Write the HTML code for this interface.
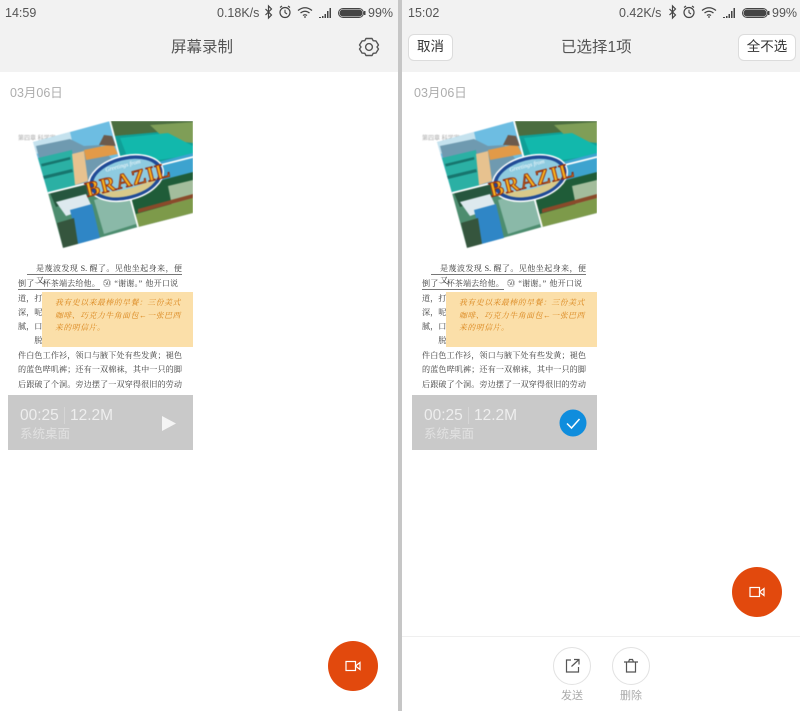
<!DOCTYPE html>
<html lang="zh"><head><meta charset="utf-8"><title>屏幕录制</title>
<style>
*{box-sizing:border-box;margin:0;padding:0}
html,body{width:800px;height:711px;overflow:hidden;background:#fff}
body{position:relative;font-family:"Liberation Sans","Noto Sans CJK SC",sans-serif;color:#555;filter:blur(.3px)}
.a{position:absolute;white-space:nowrap}
.hd{position:absolute;top:0;height:72px;background:#f2f2f2}
.st{font-size:12.5px;color:#555;top:5px;line-height:16px}
.ti{font-size:15.5px;color:#555;top:38px;line-height:20px}
.dt{font-size:12.5px;color:#adadad;top:85px;line-height:16px}
.btn{position:absolute;top:34px;height:27px;background:#fff;border:1.5px solid #dcdcdc;border-radius:6px;font-size:13.5px;color:#333;text-align:center;line-height:24px}
.th{position:absolute;top:121px;width:185px;height:329px;overflow:hidden;background:#fff}
.th svg{position:absolute;left:0;top:0}
.pc{filter:blur(.5px)}
.ln{position:absolute;left:10px;width:164px;font:8.1px/12px "Liberation Serif","Noto Serif CJK SC",serif;color:#3a3a3a;white-space:nowrap}
.j{white-space:normal;text-align:justify;text-align-last:justify;text-justify:inter-character}
.nt{position:absolute;left:34px;top:171px;width:151px;height:55px;background:#fbdfa9;font:italic 7.8px/12.500px "Liberation Serif","Noto Serif CJK SC",serif;color:#d98318;padding:5px 0 0 13px;letter-spacing:.6px;white-space:nowrap}
.ul{position:absolute;height:1px;background:#777}
.bar{position:absolute;left:0;top:274px;width:185px;height:55px;background:#c9c9c9}
.bar div{position:absolute;white-space:nowrap;color:rgba(255,255,255,.68)}
.tm{left:12px;top:11px;font-size:15.5px;line-height:20px}
.sz{left:62px;top:11px;font-size:15.5px;line-height:20px}
.dv{left:56px;top:12px;width:1px;height:17px;background:rgba(255,255,255,.25)}
.nm{left:12px;top:31px;font-size:12.5px;line-height:16px;color:rgba(255,255,255,.45)!important}
.fab{position:absolute;width:50px;height:50px;border-radius:50%;background:#e2490d}
.fab svg{position:absolute;left:15px;top:15px}
.cc{position:absolute;top:647px;width:38px;height:38px;border-radius:50%;border:1px solid #e2e2e2;background:#fff}
.cl{position:absolute;top:689px;font-size:11px;line-height:14px;color:#aaa;text-align:center;width:38px}
</style></head><body>

<div class="hd" style="left:0;width:398px"></div>
<div class="hd" style="left:402px;width:398px"></div>
<div class="a" style="left:398px;top:0;width:4px;height:711px;background:#c6c6c6"></div>

<!-- LEFT status -->
<div class="a st" style="left:5px">14:59</div>
<div class="a st" style="left:217px">0.18K/s</div>
<svg class="a" style="left:264px;top:4px" width="128" height="16" viewBox="0 0 128 16" fill="none" stroke="#444">
<path d="M1.500 5l6 6-3 3V2l3 3-6 6" stroke-width="1.200"/>
<circle cx="21" cy="8.500" r="5" stroke-width="1.200"/><path d="M21 5.800V8.600l2 1.400M16 3.500l2-1.500M26 3.500l-2-1.500" stroke-width="1.100"/>
<path d="M34 6.500q7-5.500 14 0M36.500 9q4.500-3.500 9 0M39 11.500q2-1.500 4 0" stroke-width="1.300"/><circle cx="41" cy="13" r=".9" fill="#444" stroke="none"/>
<path d="M55 13h2v1h-2zM58 12h1.500v2H58zM60.500 10H62v4h-1.500zM63 7h1.500v7H63zM65.500 4H67v10h-1.500z" fill="#444" stroke="none"/>
<rect x="74.500" y="4.500" width="25" height="9" rx="4.500" stroke-width="1"/><rect x="75.500" y="5.500" width="23" height="7" rx="3.500" fill="#444" stroke="none"/><rect x="100" y="7" width="1.500" height="4" fill="#444" stroke="none"/>
</svg>
<div class="a st" style="left:368px">99%</div>
<div class="a ti" style="left:171px">屏幕录制</div>
<svg class="a" style="left:358px;top:36px" width="22" height="22" viewBox="0 0 22 22" fill="none" stroke="#555" stroke-width="1.400">
<path d="M8 2.500h6l1.200 2.200 2.700.2L20.500 9l-1.500 2 1.500 2-2.600 4.100-2.700.2L14 19.500H8l-1.200-2.200-2.700-.2L1.500 13 3 11 1.500 9l2.600-4.100 2.700-.2z" stroke-linejoin="round"/><circle cx="11" cy="11" r="3.400"/></svg>
<div class="a dt" style="left:10px">03月06日</div>

<!-- LEFT thumb -->
<div class="th" style="left:8px">
<svg class="pc" width="185" height="130" viewBox="8 121 185 130">
<defs><clipPath id="c1"><path d="M33 142L110 121H193V213L63 248z"/></clipPath></defs>
<text x="18" y="140" font-size="6" fill="#aaa" font-family="Liberation Sans,Noto Sans CJK SC,sans-serif">第四章 科学家</text>
<g clip-path="url(#c1)">
<path d="M33 142L110 121 124 174 48 193z" fill="#6dbde2"/>
<path d="M33 142L70 132 73 145 36 154z" fill="#c5e2ee"/>
<path d="M36 146L70 139 84 146 100 145 122 172 48 193z" fill="#6f9ab0"/>
<path d="M38 158L72 150 76 186 48 193z" fill="#2bb0a4"/>
<path d="M41 164L70 157 70.500 159.500 42 166.500zM43 176L72 169 73 172 44 179z" fill="#17756e"/>
<path d="M72 154L84 151 88 181 75 185z" fill="#e7c28f"/>
<path d="M84 150L113 144 118 154 86 160z" fill="#e29a48"/>
<path d="M99 145L104 135 112 136 116 146z" fill="#6c5a4c"/>
<path d="M110 121H193V157L124 174z" fill="#109f97"/>
<path d="M110 121H193V129L114 136z" fill="#4b6d40"/>
<path d="M150 125L193 122V143L166 140z" fill="#7f9e57"/>
<path d="M120 138L168 133 193 146 193 155 130 164z" fill="#12b8ac"/>
<path d="M48 193L124 174 138 227 63 248z" fill="#4d8d6f"/>
<path d="M50 193L86 184 88 196 56 207z" fill="#26563e"/>
<path d="M56 202L86 194 92 207 66 216z" fill="#dde9ee"/>
<path d="M70 210L92 204 100 238 78 244z" fill="#2f86c6"/>
<path d="M57 223L74 218 78 244 63 248z" fill="#35553d"/>
<path d="M94 200L128 190 136 224 104 234z" fill="#8ab9a8"/>
<path d="M124 174L193 157V213L138 227z" fill="#1f5c38"/>
<path d="M158 162L193 153V172L162 180z" fill="#3da3cf"/>
<path d="M168 186L193 180V203L172 206z" fill="#a3bd9c"/>
<path d="M136 214L193 198V213L138 227z" fill="#7d9a4a"/>
<path d="M138 209L193 194V198L138 213z" fill="#8a4a2a"/>
<path d="M110 121L138 227M48 193L193 157" stroke="#fff" stroke-width="1.800" fill="none"/>
</g>
<g transform="rotate(-14 126 178)">
<ellipse cx="126" cy="178" rx="38" ry="22" fill="#1f4a96" stroke="#fff" stroke-width="1.500"/>
<ellipse cx="126" cy="178" rx="33.500" ry="18" fill="#8ecbe0"/>
<path d="M95 184q31 10 62 0q-8 12-31 12t-31-12z" fill="#d8c98a"/>
<text x="126" y="167" text-anchor="middle" font-size="6" font-style="italic" fill="#fff" font-family="Liberation Serif,serif">Greetings from</text>
<text x="84" y="187" textLength="86" font-size="21" font-weight="700" fill="#f7b21e" stroke="#8a2410" stroke-width=".9" font-family="Liberation Serif,serif">BRAZIL</text>
</g>
</svg>
<div class="ln j" style="top:142px;left:28px;width:146px">是蔑波发现 S. 醒了。见他坐起身来，便又</div>
<div class="ul" style="left:19px;top:153px;width:155px"></div>
<div class="ln" style="top:157px;word-spacing:1px;letter-spacing:.1px">倒了一杯茶端去给他。 ㊿ “谢谢。” 他开口说</div>
<div class="ul" style="left:10px;top:168px;width:82px"></div>
<div class="ln" style="top:172px">道，打</div>
<div class="ln" style="top:186px">深，呢</div>
<div class="ln" style="top:200px">腻，口</div>
<div class="ln" style="top:214px">　　脱</div>
<div class="ln j" style="top:229px">件白色工作衫，领口与腋下处有些发黄；褪色</div>
<div class="ln j" style="top:243px">的蓝色哔叽裤；还有一双棉袜，其中一只的脚</div>
<div class="ln j" style="top:258px">后跟破了个洞。旁边摆了一双穿得很旧的劳动</div>
<div class="nt">我有史以来最棒的早餐：三份美式<br>咖啡、巧克力牛角面包←一张巴西<br>来的明信片。</div>
<div class="bar"><div class="tm">00:25</div><div class="dv"></div><div class="sz">12.2M</div><div class="nm">系统桌面</div>
<svg style="position:absolute;left:154px;top:21px" width="15" height="15"><path d="M0 0L14 7.500 0 15z" fill="#f4f4f4"/></svg></div>
</div>

<div class="fab" style="left:328px;top:641px"><svg width="20" height="20" viewBox="0 0 20 20" fill="none" stroke="#fff" stroke-width="1.200"><rect x="3" y="5.500" width="9.500" height="9"/><path d="M12.500 10L17 6.500v7z"/></svg></div>

<!-- RIGHT -->
<div class="a st" style="left:408px">15:02</div>
<div class="a st" style="left:619px">0.42K/s</div>
<svg class="a" style="left:668px;top:4px" width="128" height="16" viewBox="0 0 128 16" fill="none" stroke="#444">
<path d="M1.500 5l6 6-3 3V2l3 3-6 6" stroke-width="1.200"/>
<circle cx="21" cy="8.500" r="5" stroke-width="1.200"/><path d="M21 5.800V8.600l2 1.400M16 3.500l2-1.500M26 3.500l-2-1.500" stroke-width="1.100"/>
<path d="M34 6.500q7-5.500 14 0M36.500 9q4.500-3.500 9 0M39 11.500q2-1.500 4 0" stroke-width="1.300"/><circle cx="41" cy="13" r=".9" fill="#444" stroke="none"/>
<path d="M55 13h2v1h-2zM58 12h1.500v2H58zM60.500 10H62v4h-1.500zM63 7h1.500v7H63zM65.500 4H67v10h-1.500z" fill="#444" stroke="none"/>
<rect x="74.500" y="4.500" width="25" height="9" rx="4.500" stroke-width="1"/><rect x="75.500" y="5.500" width="23" height="7" rx="3.500" fill="#444" stroke="none"/><rect x="100" y="7" width="1.500" height="4" fill="#444" stroke="none"/>
</svg>
<div class="a st" style="left:772px">99%</div>
<div class="btn" style="left:408px;width:45px">取消</div>
<div class="btn" style="left:738px;width:58px">全不选</div>
<div class="a ti" style="left:561px">已选择1项</div>
<div class="a dt" style="left:414px">03月06日</div>

<div class="th" style="left:412px">
<svg class="pc" width="185" height="130" viewBox="8 121 185 130">
<defs><clipPath id="c2"><path d="M33 142L110 121H193V213L63 248z"/></clipPath></defs>
<text x="18" y="140" font-size="6" fill="#aaa" font-family="Liberation Sans,Noto Sans CJK SC,sans-serif">第四章 科学家</text>
<g clip-path="url(#c2)">
<path d="M33 142L110 121 124 174 48 193z" fill="#6dbde2"/>
<path d="M33 142L70 132 73 145 36 154z" fill="#c5e2ee"/>
<path d="M36 146L70 139 84 146 100 145 122 172 48 193z" fill="#6f9ab0"/>
<path d="M38 158L72 150 76 186 48 193z" fill="#2bb0a4"/>
<path d="M41 164L70 157 70.500 159.500 42 166.500zM43 176L72 169 73 172 44 179z" fill="#17756e"/>
<path d="M72 154L84 151 88 181 75 185z" fill="#e7c28f"/>
<path d="M84 150L113 144 118 154 86 160z" fill="#e29a48"/>
<path d="M99 145L104 135 112 136 116 146z" fill="#6c5a4c"/>
<path d="M110 121H193V157L124 174z" fill="#109f97"/>
<path d="M110 121H193V129L114 136z" fill="#4b6d40"/>
<path d="M150 125L193 122V143L166 140z" fill="#7f9e57"/>
<path d="M120 138L168 133 193 146 193 155 130 164z" fill="#12b8ac"/>
<path d="M48 193L124 174 138 227 63 248z" fill="#4d8d6f"/>
<path d="M50 193L86 184 88 196 56 207z" fill="#26563e"/>
<path d="M56 202L86 194 92 207 66 216z" fill="#dde9ee"/>
<path d="M70 210L92 204 100 238 78 244z" fill="#2f86c6"/>
<path d="M57 223L74 218 78 244 63 248z" fill="#35553d"/>
<path d="M94 200L128 190 136 224 104 234z" fill="#8ab9a8"/>
<path d="M124 174L193 157V213L138 227z" fill="#1f5c38"/>
<path d="M158 162L193 153V172L162 180z" fill="#3da3cf"/>
<path d="M168 186L193 180V203L172 206z" fill="#a3bd9c"/>
<path d="M136 214L193 198V213L138 227z" fill="#7d9a4a"/>
<path d="M138 209L193 194V198L138 213z" fill="#8a4a2a"/>
<path d="M110 121L138 227M48 193L193 157" stroke="#fff" stroke-width="1.800" fill="none"/>
</g>
<g transform="rotate(-14 126 178)">
<ellipse cx="126" cy="178" rx="38" ry="22" fill="#1f4a96" stroke="#fff" stroke-width="1.500"/>
<ellipse cx="126" cy="178" rx="33.500" ry="18" fill="#8ecbe0"/>
<path d="M95 184q31 10 62 0q-8 12-31 12t-31-12z" fill="#d8c98a"/>
<text x="126" y="167" text-anchor="middle" font-size="6" font-style="italic" fill="#fff" font-family="Liberation Serif,serif">Greetings from</text>
<text x="84" y="187" textLength="86" font-size="21" font-weight="700" fill="#f7b21e" stroke="#8a2410" stroke-width=".9" font-family="Liberation Serif,serif">BRAZIL</text>
</g>
</svg>
<div class="ln j" style="top:142px;left:28px;width:146px">是蔑波发现 S. 醒了。见他坐起身来，便又</div>
<div class="ul" style="left:19px;top:153px;width:155px"></div>
<div class="ln" style="top:157px;word-spacing:1px;letter-spacing:.1px">倒了一杯茶端去给他。 ㊿ “谢谢。” 他开口说</div>
<div class="ul" style="left:10px;top:168px;width:82px"></div>
<div class="ln" style="top:172px">道，打</div>
<div class="ln" style="top:186px">深，呢</div>
<div class="ln" style="top:200px">腻，口</div>
<div class="ln" style="top:214px">　　脱</div>
<div class="ln j" style="top:229px">件白色工作衫，领口与腋下处有些发黄；褪色</div>
<div class="ln j" style="top:243px">的蓝色哔叽裤；还有一双棉袜，其中一只的脚</div>
<div class="ln j" style="top:258px">后跟破了个洞。旁边摆了一双穿得很旧的劳动</div>
<div class="nt">我有史以来最棒的早餐：三份美式<br>咖啡、巧克力牛角面包←一张巴西<br>来的明信片。</div>
<div class="bar"><div class="tm">00:25</div><div class="dv"></div><div class="sz">12.2M</div><div class="nm">系统桌面</div>
<svg style="position:absolute;left:147px;top:14px" width="28" height="28" viewBox="0 0 28 28"><circle cx="14" cy="14" r="13.500" fill="#0f8ddd"/><path d="M8 14.500l4.500 4.500L20.500 10" fill="none" stroke="#fff" stroke-width="1.500"/></svg></div>
</div>

<div class="fab" style="left:732px;top:567px"><svg width="20" height="20" viewBox="0 0 20 20" fill="none" stroke="#fff" stroke-width="1.200"><rect x="3" y="5.500" width="9.500" height="9"/><path d="M12.500 10L17 6.500v7z"/></svg></div>

<div class="a" style="left:402px;top:636px;width:398px;height:1px;background:#efefef"></div>
<div class="cc" style="left:553px"><svg width="36" height="36" viewBox="0 0 36 36" fill="none" stroke="#555" stroke-width="1.200"><path d="M17 12h-4.500v12h12v-5M17.500 18.500L25 11.500M20 11.500h5v5"/></svg></div>
<div class="cc" style="left:612px"><svg width="36" height="36" viewBox="0 0 36 36" fill="none" stroke="#555" stroke-width="1.200"><path d="M11 14h14M13.500 14v10h9V14M15.500 14l1-2.500h3l1 2.500"/></svg></div>
<div class="cl" style="left:553px">发送</div>
<div class="cl" style="left:612px">删除</div>
</body></html>
